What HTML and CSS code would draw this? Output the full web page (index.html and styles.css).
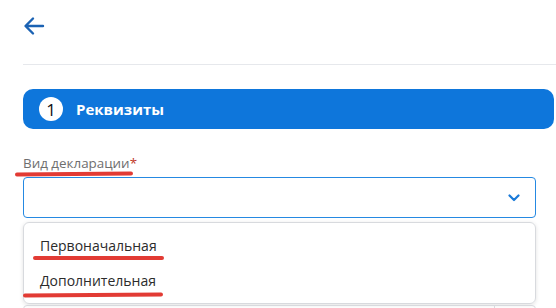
FILE: index.html
```html
<!DOCTYPE html>
<html lang="ru">
<head>
    <meta charset="UTF-8">
    <meta name="viewport" content="width=device-width, initial-scale=1.0">
    <title>Декларация</title>
    <link rel="stylesheet" href="styles.css">
</head>
<body>
    <div class="page">
        <div class="topbar">
            <button class="back" aria-label="Назад">
                <svg width="22" height="20" viewBox="0 0 22 20">
                    <path d="M20 10H3M10 2.5L2.5 10L10 17.5" fill="none" stroke="#1b62b3" stroke-width="2.4" stroke-linecap="round" stroke-linejoin="round"/>
                </svg>
            </button>
        </div>
        <hr class="sep">

        <div class="step">
            <span class="step-num">1</span>
            <span class="step-title">Реквизиты</span>
        </div>

        <div class="field">
            <label class="label">Вид декларации<span class="req">*</span></label>
            <span class="mark mark-label"></span>
            <div class="select">
                <svg class="chevron" width="12" height="8" viewBox="0 0 12 8">
                    <path d="M1.5 1.5L6 6L10.5 1.5" fill="none" stroke="#1a7ad8" stroke-width="2.2" stroke-linecap="round" stroke-linejoin="round"/>
                </svg>
            </div>
            <ul class="options">
                <li>Первоначальная<span class="mark mark-one"></span></li>
                <li>Дополнительная<span class="mark mark-two"></span></li>
            </ul>
            <div class="next-row">
                <div class="next-cell"></div>
                <div class="next-cell small"></div>
            </div>
        </div>
    </div>
</body>
</html>
```

FILE: styles.css
```css
* {
    box-sizing: border-box;
}
body {
    margin: 0;
    font-family: "Open Sans", Arial, sans-serif;
    background-color: #fff;
    color: #333;
    overflow: hidden;
}
.page {
    padding-left: 23px;
    height: 308px;
    overflow: hidden;
}
.topbar {
    height: 54px;
    display: flex;
    align-items: center;
    padding-bottom: 2px;
}
.back {
    border: none;
    background: none;
    padding: 0;
    margin: 0;
    display: flex;
    cursor: pointer;
}
.sep {
    border: none;
    border-top: 1px solid #e6e8ec;
    margin: 10px 0 0;
}
.step {
    margin-top: 24px;
    margin-right: 2px;
    height: 40px;
    background-color: #0e76db;
    border-radius: 10px;
    display: flex;
    align-items: center;
    padding-left: 16px;
}
.step-num {
    width: 24px;
    height: 24px;
    border-radius: 50%;
    background-color: #fff;
    color: #111;
    font-size: 17px;
    display: flex;
    align-items: center;
    justify-content: center;
    margin-right: 13px;
}
.step-title {
    color: #fff;
    font-weight: 700;
    font-size: 15px;
}
.field {
    position: relative;
    margin-top: 25px;
    width: 513px;
}
.label {
    display: block;
    font-size: 13.4px;
    color: #6e6e6e;
    line-height: 18px;
}
.req {
    color: #c0392b;
}
.mark {
    position: absolute;
    height: 4px;
    background-color: #e23b34;
    border-radius: 2px;
}
.mark-label {
    left: -8px;
    top: 18px;
    width: 118px;
    transform: rotate(-0.6deg);
}
.select {
    margin-top: 5px;
    height: 41px;
    border: 1px solid #2589e2;
    border-radius: 4px;
    display: flex;
    align-items: center;
    justify-content: flex-end;
    padding-right: 15px;
}
.options {
    list-style: none;
    margin: 4px 0 0;
    padding: 5px 0 0;
    height: 82px;
    border: 1px solid #d8dade;
    border-radius: 6px;
    box-shadow: 0 1px 4px rgba(0, 0, 0, 0.12);
}
.options li {
    position: relative;
    font-size: 14px;
    color: #2b2b2b;
    padding-left: 16px;
    height: 35px;
    line-height: 35px;
}
.mark-one {
    left: 9px;
    top: 28px;
    width: 131px;
}
.mark-two {
    left: -1px;
    top: 30px;
    width: 140px;
    transform: rotate(-0.5deg);
}
.next-row {
    display: flex;
    margin-top: 1px;
    height: 20px;
    border: 1px solid #d8dade;
    border-radius: 4px;
}
.next-cell {
    flex: 1;
}
.next-cell.small {
    flex: 0 0 41px;
    border-left: 1px solid #d8dade;
}
```
